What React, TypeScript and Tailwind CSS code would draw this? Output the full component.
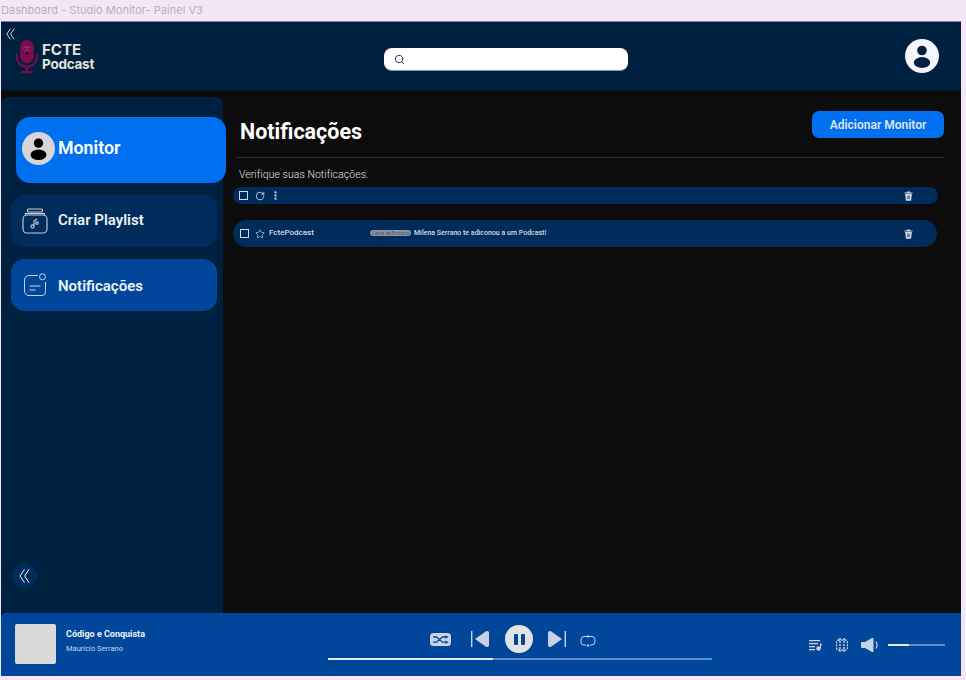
import React from 'react';
import { Search, RotateCw, EllipsisVertical, Star } from 'lucide-react';

const Avatar = ({ size, bg, fg }: { size: string; bg: string; fg: string }) => (
  <svg viewBox="0 0 34 34" className={`${size} shrink-0`}>
    <circle cx="17" cy="17" r="17" fill={bg} />
    <circle cx="17" cy="11.5" r="4.8" fill={fg} />
    <ellipse cx="17" cy="23.5" rx="8.2" ry="5.4" fill={fg} />
  </svg>
);

const MicLogo = () => (
  <svg viewBox="0 0 24 36" className="w-[24px] h-[35px] shrink-0">
    <rect x="5" y="1" width="14" height="24" rx="7" fill="#7a0c4d" />
    <path d="M1.5 15v3a10.5 10.5 0 0 0 21 0v-3" fill="none" stroke="#7a0c4d" strokeWidth="2" />
    <path d="M12 28v5M6 34h12" stroke="#7a0c4d" strokeWidth="2.4" fill="none" />
    <path d="M8 9.5a6 6 0 0 1 8 0M9.6 12a3.4 3.4 0 0 1 4.8 0" stroke="#a85a88" strokeWidth="0.7" fill="none" />
    <circle cx="12" cy="15" r="1.4" fill="#12051a" />
  </svg>
);

const DoubleChevron = ({ className }: { className: string }) => (
  <svg viewBox="0 0 11 14" className={className} fill="none" stroke="#ffffff" strokeWidth="1">
    <path d="M5.5 0.5L1 7l4.5 6.5" />
    <path d="M10 0.5L5.5 7l4.5 6.5" />
  </svg>
);

const TrashIcon = () => (
  <svg viewBox="0 0 10 11" className="w-[9px] h-[10px] shrink-0">
    <path d="M3.5 0.5h3v1h3v1.2H0.5V1.5h3z" fill="#d5dbe6" />
    <path d="M1.3 3.4h7.4L8 10a.9.9 0 0 1-.9.9H2.9A.9.9 0 0 1 2 10z" fill="#d5dbe6" />
    <path d="M3.7 5v4M5 5v4M6.3 5v4" stroke="#002c5c" strokeWidth="0.6" />
  </svg>
);

const PlaylistIcon = () => (
  <svg viewBox="0 0 26 26" className="w-[26px] h-[26px] shrink-0" fill="none" stroke="#c9ced8" strokeWidth="1.1">
    <rect x="5.5" y="1" width="15" height="3" rx="1" />
    <path d="M3.5 7V5.5h19V7" />
    <rect x="1" y="7" width="24" height="18" rx="4" />
    <circle cx="10.5" cy="18.5" r="1.6" />
    <circle cx="15" cy="15" r="1.3" />
    <path d="M12 18l0-5 3-2" />
  </svg>
);

const NotifyIcon = () => (
  <svg viewBox="0 0 24 24" className="w-[24px] h-[24px] shrink-0" fill="none" stroke="#c9ced8" strokeWidth="1">
    <path d="M15 2.5H6a4.5 4.5 0 0 0-4.5 4.5v11A4.5 4.5 0 0 0 6 22.5h13a3.5 3.5 0 0 0 3.5-3.5V9" />
    <circle cx="19.5" cy="3.8" r="3" />
    <path d="M6.5 13h11M6.5 17h6" />
  </svg>
);

const ShuffleIcon = () => (
  <svg viewBox="0 0 21 13" className="w-[21px] h-[13px]">
    <rect width="21" height="13" rx="3.5" fill="#c9d2e4" />
    <path d="M3 4h3.5l6 5.2H17M3 9.2h3.5l6-5.2H17" stroke="#00479b" strokeWidth="1.3" fill="none" />
    <path d="M15.5 2.2l3 1.8-3 1.8zM15.5 7.4l3 1.8-3 1.8z" fill="#00479b" />
  </svg>
);

const PrevIcon = ({ flip }: { flip?: boolean }) => (
  <svg viewBox="0 0 18 18" className={`w-[18px] h-[18px] ${flip ? '-scale-x-100' : ''}`}>
    <rect x="0" y="1" width="1.4" height="16" fill="#c9d2e4" />
    <path d="M4 9 L15 1.2 Q18 0.4 18 3 V15 Q18 17.6 15 16.8 Z" fill="#c9d2e4" />
  </svg>
);

const RepeatIcon = () => (
  <svg viewBox="0 0 16 14" className="w-[16px] h-[14px]" fill="none" stroke="#c9d2e4" strokeWidth="1">
    <path d="M4 2.5h8a3 3 0 0 1 3 3v2a3.5 3.5 0 0 1-3.5 3.5H10M6 11H4a3 3 0 0 1-3-3V6a3.5 3.5 0 0 1 3-3.5" />
    <circle cx="8" cy="2.5" r="0.8" fill="#c9d2e4" />
    <circle cx="8" cy="11.5" r="0.8" fill="#c9d2e4" />
  </svg>
);

const QueueIcon = () => (
  <svg viewBox="0 0 13 12" className="w-[13px] h-[12px]" fill="#c9d2e4">
    <rect x="0" y="1" width="11" height="1.3" />
    <rect x="0" y="4" width="9" height="1.3" />
    <rect x="0" y="7" width="6" height="1.3" />
    <rect x="0" y="10" width="6" height="1.3" />
    <circle cx="9.5" cy="9.5" r="2.2" />
    <path d="M11 9.5V4l2 1.4v1L12 6v3.5z" />
  </svg>
);

const DeviceIcon = () => (
  <svg viewBox="0 0 12 14" className="w-[12px] h-[14px]" fill="none" stroke="#c9d2e4">
    <rect x="0.5" y="2" width="11" height="10" rx="2" strokeWidth="1.4" strokeDasharray="2 1" />
    <path d="M4 0v14M8 0v14" strokeWidth="1.4" strokeDasharray="2 1" />
  </svg>
);

const SpeakerIcon = () => (
  <svg viewBox="0 0 18 14" className="w-[18px] h-[14px]" fill="#c9d2e4">
    <path d="M0 5a1 1 0 0 1 1-1h3l7-4h1.5v14H11L4 10H1a1 1 0 0 1-1-1z" />
    <path d="M15 3.5c1.2 2 1.2 5 0 7" fill="none" stroke="#c9d2e4" strokeWidth="1.2" />
  </svg>
);

const Checkbox = () => (
  <span className="w-[9px] h-[9px] border-[1.5px] border-[#d5dbe6] shrink-0" />
);

const NavCard = ({ icon, label, className, labelClass }: { icon: React.ReactNode; label: string; className: string; labelClass: string }) => (
  <div className={`flex items-center rounded-[14px] w-[206px] h-[52px] ${className}`}>
    {icon}
    <span className={`text-[15px] font-semibold text-[#eef1f6] ${labelClass}`}>{label}</span>
  </div>
);

export default function App() {
  return (
    <div className="w-[966px] h-[680px] overflow-hidden bg-[#f5e6f7] font-['Inter',sans-serif] flex flex-col">
      <div className="h-[21px] pl-[1px] flex items-center text-[11px] tracking-[0.03px] text-[#b9adbf]">
        Dashboard - Studio Monitor- Painel V3
      </div>

      <div className="ml-[1px] w-[960px] h-[655px] flex flex-col bg-[#0c0c0c] border-t border-[#8d8299] font-['Roboto',sans-serif]">
        {/* Header */}
        <header className="h-[69px] bg-[#00203f] flex items-center relative shrink-0 border-b border-[#0a1622]">
          <DoubleChevron className="absolute left-[5px] top-[6px] w-[9px] h-[12px]" />
          <div className="flex items-center ml-[14px] w-[369px]">
            <MicLogo />
            <div className="ml-[3px] mt-[2px] font-['Inter',sans-serif] font-bold text-[#e3e3dc]">
              <div className="text-[15px] leading-[15px]">FCTE</div>
              <div className="text-[13.5px] leading-[15px] tracking-[-0.25px]">Podcast</div>
            </div>
          </div>
          <div className="mt-[7px] w-[244px] h-[23px] bg-white rounded-[8px] flex items-center pl-[10px] border-b border-[#8095a8]">
            <Search size={11} strokeWidth={2} className="text-[#2a2433]" />
          </div>
          <div className="ml-auto mr-[22px]">
            <Avatar size="w-[34px] h-[34px]" bg="#f8f5fd" fg="#00203f" />
          </div>
        </header>

        <div className="flex-1 flex min-h-0 pt-[6px]">
          {/* Sidebar */}
          <aside className="relative z-10 w-[222px] shrink-0 bg-[#00203f] rounded-t-[8px] flex flex-col pt-[20px]">
            <div className="ml-[15px] w-[210px] h-[66px] bg-[#006ff0] rounded-[14px] flex items-center pl-[6px] pb-[4px] gap-[3px]">
              <Avatar size="w-[33px] h-[33px]" bg="#d6d5d8" fg="#000000" />
              <span className="text-[17.8px] font-semibold text-white">Monitor</span>
            </div>
            <div className="ml-[10px] mt-[12px] flex flex-col gap-[12px]">
              <NavCard
                icon={<span className="ml-[11px] mr-[10px]"><PlaylistIcon /></span>}
                label="Criar Playlist"
                className="bg-[#002c5c]"
                labelClass="pb-[1px]"
              />
              <NavCard
                icon={<span className="ml-[12px] mr-[11px]"><NotifyIcon /></span>}
                label="Notificações"
                className="bg-[#00479b]"
                labelClass="pt-[3px]"
              />
            </div>
            <div className="mt-auto mb-[25px] ml-[11px] w-[25px] h-[25px] rounded-full bg-[#002c5c] flex items-center justify-center">
              <DoubleChevron className="w-[11px] h-[14px]" />
            </div>
          </aside>

          {/* Main */}
          <main className="flex-1 min-w-0 flex flex-col pl-[10px] pr-[17px]">
            <div className="ml-[3px] pt-[14px] h-[61px] border-b border-[#2e2e2e] flex justify-between items-start">
              <h1 className="pl-[4px] pt-[7px] text-[21.5px] leading-[28px] font-bold text-white">Notificações</h1>
              <button className="w-[132px] h-[27px] rounded-[7px] bg-[#006ff0] text-[12px] font-semibold text-[#dfe6f2]">
                Adicionar Monitor
              </button>
            </div>
            <p className="mt-[10px] pl-[6px] text-[10.5px] leading-[13px] text-[#e0e0e0] font-light tracking-[0.05px]">
              Verifique suas Notificações.
            </p>
            <div className="mt-[6px] w-[705px] h-[17px] rounded-full bg-[#002c5c] flex items-center pl-[6px]">
              <Checkbox />
              <RotateCw size={10} strokeWidth={2} className="ml-[7px] text-[#d5dbe6]" />
              <EllipsisVertical size={11} strokeWidth={3} className="ml-[5px] text-[#d5dbe6]" />
              <span className="ml-auto mr-[25px] flex"><TrashIcon /></span>
            </div>
            <div className="mt-[16px] w-[704px] h-[27px] rounded-full bg-[#002c5c] flex items-center pl-[7px]">
              <Checkbox />
              <Star size={10} strokeWidth={1.5} className="ml-[6px] text-[#e6eaf2]" />
              <span className="ml-[4px] w-[101px] mb-[1px] text-[8px] font-medium text-[#d5dbe6]">FctePodcast</span>
              <span className="w-[41px] h-[6px] mb-[1px] rounded-full bg-[#8d94a3] text-[5px] leading-[6px] text-center text-[#4d5361] whitespace-nowrap">
                Caixa de Entrada
              </span>
              <span className="ml-[3px] mb-[1px] text-[7px] font-medium text-[#d5dbe6]">Milena Serrano te adiconou a um Podcast!</span>
              <span className="ml-auto mr-[24px] flex"><TrashIcon /></span>
            </div>
          </main>
        </div>

        {/* Player */}
        <footer className="relative z-20 h-[63px] shrink-0 bg-[#00479b] rounded-tl-[4px] flex items-start">
          <div className="w-[327px] flex items-center pl-[14px] pt-[11px] shrink-0">
            <div className="w-[41px] h-[40px] rounded-[2px] bg-[#d9d9d9]" />
            <div className="ml-[10px] mb-[6px]">
              <div className="text-[9px] leading-[11px] font-bold text-[#eef1f6]">Código e Conquista</div>
              <div className="mt-[4px] text-[7.5px] leading-[10px] text-[#c9d6ea]">Maurício Serrano</div>
            </div>
          </div>
          <div className="w-[384px] shrink-0 flex flex-col pt-[12px]">
            <div className="h-[28px] flex items-center pl-[102px]">
              <ShuffleIcon />
              <span className="ml-[20px] flex"><PrevIcon /></span>
              <div className="ml-[16px] w-[28px] h-[28px] rounded-full bg-[#e3e3e6] flex items-center justify-center gap-[3px]">
                <span className="w-[4px] h-[11px] rounded-[1px] bg-[#00479b]" />
                <span className="w-[4px] h-[11px] rounded-[1px] bg-[#00479b]" />
              </div>
              <span className="ml-[15px] flex"><PrevIcon flip /></span>
              <span className="ml-[14px] mt-[4px] flex"><RepeatIcon /></span>
            </div>
            <div className="mt-[5px] h-[2px] bg-[#5f8cc4]">
              <div className="h-full w-[165px] bg-[#e6e6e6]" />
            </div>
          </div>
          <div className="flex items-center pt-[25px] pl-[97px]">
            <QueueIcon />
            <span className="ml-[14px] flex"><DeviceIcon /></span>
            <span className="ml-[13px] flex"><SpeakerIcon /></span>
            <div className="ml-[9px] w-[57px] h-[2px] bg-[#5f8cc4]">
              <div className="h-full w-[21px] bg-[#e6e6e6]" />
            </div>
          </div>
        </footer>
      </div>
    </div>
  );
}
